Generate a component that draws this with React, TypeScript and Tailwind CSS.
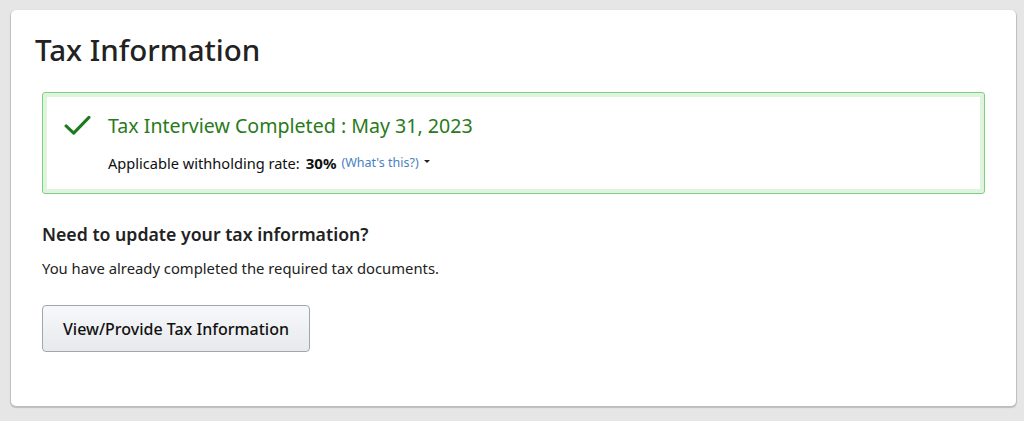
import React from "react";

function CheckIcon() {
  return (
    <svg width="27" height="21" viewBox="0 0 28 22" fill="none">
      <path d="M2 11.5 L10 19 L26 2.5" stroke="#1f7a1f" strokeWidth="3.2" strokeLinecap="round" strokeLinejoin="round" />
    </svg>
  );
}

export default function App() {
  return (
    <div className="w-[1024px] h-[421px] bg-[#e6e6e6] pt-[10px] pl-[11px] font-['Noto_Sans','Open_Sans',sans-serif] text-[#0f1111]">
      <div className="w-[1005px] h-[396px] bg-white rounded-[5px] shadow-[0_1px_1px_1px_rgba(0,0,0,0.18)]">
        <h1 className="pl-[24px] pt-[21px] text-[29.5px] leading-[38px] font-medium text-[#222]">Tax Information</h1>

        <div className="px-[31px]">
          {/* completed banner */}
          <div className="mt-[23px] h-[102px] border border-[#80cf80] rounded-[3px] shadow-[inset_0_0_0_4px_#dff4dc] flex flex-col justify-center pl-[21px]">
            <div className="flex items-center gap-[17px] -mt-[1px]">
              <CheckIcon />
              <span className="text-[19.6px] leading-[26px] text-[#2a7a1c]">Tax Interview Completed : May 31, 2023</span>
            </div>
            <div className="mt-[14px] pl-[44px] text-[14.6px] leading-[20px] flex items-center">
              <span>Applicable withholding rate:</span>
              <span className="ml-[6px] font-bold text-[15px]">30%</span>
              <span className="ml-[5px] text-[12.5px] text-[#4a7fc0]">(What's this?)</span>
              <span className="ml-[5px] inline-block w-0 h-0 border-l-[3px] border-r-[3px] border-t-[3px] border-l-transparent border-r-transparent border-t-[#222] mb-[2px]"></span>
            </div>
          </div>

          <h2 className="mt-[28px] text-[17.7px] leading-[24px] font-semibold text-[#222]">Need to update your tax information?</h2>
          <p className="mt-[12px] text-[14.8px] leading-[20px] text-[#222]">You have already completed the required tax documents.</p>

          <button className="mt-[27px] w-[268px] h-[47px] rounded-[4px] border border-[#a2a6ac] bg-gradient-to-b from-[#f7f8fa] to-[#e7e9ec] text-[16px] font-medium text-[#111]">
            View/Provide Tax Information
          </button>
        </div>
      </div>
    </div>
  );
}
